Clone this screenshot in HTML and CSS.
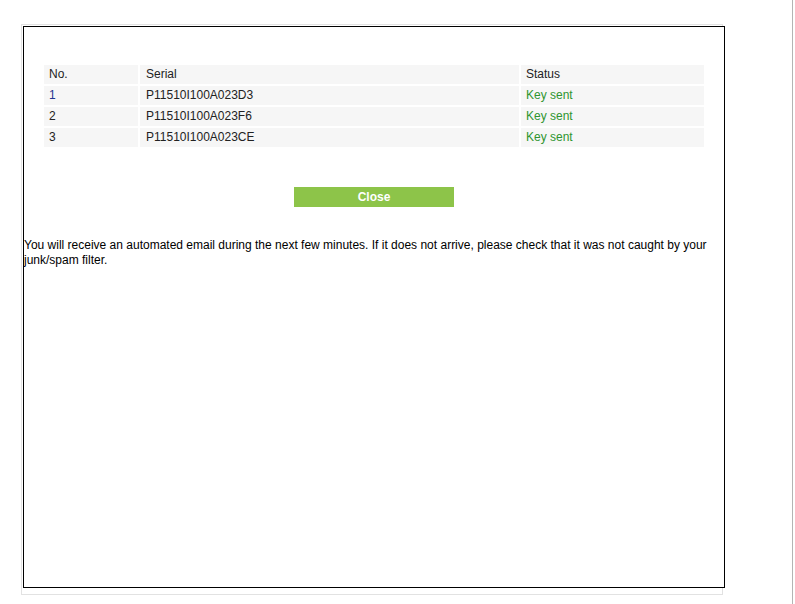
FILE: index.html
```html
<!DOCTYPE html>
<html>
<head>
<meta charset="utf-8">
<link rel="stylesheet" href="styles.css">
</head>
<body>
<div class="page">
  <div class="frame">
    <div class="dialog">
      <table class="keys">
        <colgroup>
          <col class="c-no">
          <col class="c-serial">
          <col class="c-status">
        </colgroup>
        <thead>
          <tr><th>No.</th><th>Serial</th><th>Status</th></tr>
        </thead>
        <tbody>
          <tr><td class="num first">1</td><td>P11510I100A023D3</td><td class="ok">Key sent</td></tr>
          <tr><td class="num">2</td><td>P11510I100A023F6</td><td class="ok">Key sent</td></tr>
          <tr><td class="num">3</td><td>P11510I100A023CE</td><td class="ok">Key sent</td></tr>
        </tbody>
      </table>
      <div class="actions">
        <button class="close-btn" type="button">Close</button>
      </div>
      <p class="note">You will receive an automated email during the next few minutes. If it does not arrive, please check that it was not caught by your junk/spam filter.</p>
    </div>
  </div>
</div>
</body>
</html>
```

FILE: styles.css
```css
html, body {
  margin: 0;
  padding: 0;
  background: #ffffff;
  overflow: hidden;
}
body {
  font-family: "Liberation Sans", Arial, sans-serif;
  font-size: 12px;
  color: #000;
}
.page {
  width: 793px;
  height: 604px;
  border-right: 1px solid #b4b4b4;
  padding-top: 24px;
  padding-left: 21px;
  box-sizing: border-box;
}
.frame {
  width: 702px;
  height: 571px;
  box-sizing: border-box;
  border: 1px solid #e2e2e2;
  padding: 1px;
}
.dialog {
  width: 702px;
  height: 562px;
  box-sizing: border-box;
  border: 1px solid #000;
  background: #fff;
  padding-top: 36px;
}
.keys {
  width: 664px;
  margin: 0 auto;
  border-collapse: separate;
  border-spacing: 2px;
  font-size: 12px;
}
.c-no { width: 94px; }
.c-serial { width: 379px; }
.c-status { width: 183px; }
.keys th, .keys td {
  background: #f6f6f6;
  height: 19px;
  padding: 0 5px;
  text-align: left;
  font-weight: normal;
  color: #222;
  line-height: 19px;
  box-sizing: border-box;
}
.keys td + td, .keys th + th { padding-left: 6px; }
.keys th + th + th, .keys td + td + td { padding-left: 5px; }
.keys td.first { color: #1f3590; }
.keys td.ok { color: #2f952f; }
.actions {
  display: flex;
  justify-content: center;
  margin-top: 38px;
}
.close-btn {
  width: 160px;
  height: 20px;
  border: none;
  background: #8dc449;
  color: #fff;
  font-family: "Liberation Sans", Arial, sans-serif;
  font-weight: bold;
  font-size: 12px;
  padding: 0;
  cursor: pointer;
}
.note {
  margin: 31px 0 0;
  line-height: 15px;
  font-size: 12px;
}
```
